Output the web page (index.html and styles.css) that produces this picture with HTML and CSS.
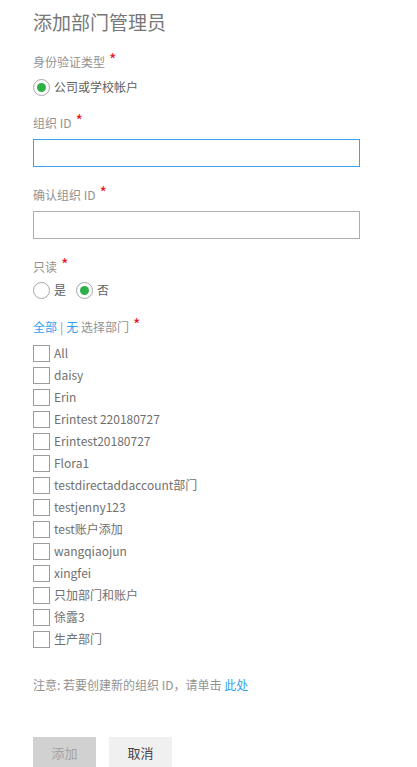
FILE: index.html
```html
<!DOCTYPE html>
<html lang="zh-CN">
<head>
<meta charset="utf-8">
<title>添加部门管理员</title>
<link rel="stylesheet" href="styles.css">
</head>
<body>
<div class="page">
  <h1 class="title">添加部门管理员</h1>

  <div class="label first">身份验证类型<span class="req">*</span></div>
  <div class="radio-row">
    <label class="radio"><span class="dot on"></span><span class="opt">公司或学校帐户</span></label>
  </div>

  <div class="label sec">组织 ID<span class="req">*</span></div>
  <input class="field focus" type="text">

  <div class="label sec2">确认组织 ID<span class="req">*</span></div>
  <input class="field" type="text">

  <div class="label sec2">只读<span class="req">*</span></div>
  <div class="radio-row tight">
    <label class="radio"><span class="dot"></span><span class="opt">是</span></label>
    <label class="radio"><span class="dot on"></span><span class="opt">否</span></label>
  </div>

  <div class="label dept"><a class="link">全部</a><span class="sep">|</span><a class="link">无</a> 选择部门<span class="req">*</span></div>
  <ul class="checks">
    <li><span class="box"></span>All</li>
    <li><span class="box"></span>daisy</li>
    <li><span class="box"></span>Erin</li>
    <li><span class="box"></span>Erintest 220180727</li>
    <li><span class="box"></span>Erintest20180727</li>
    <li><span class="box"></span>Flora1</li>
    <li><span class="box"></span>testdirectaddaccount部门</li>
    <li><span class="box"></span>testjenny123</li>
    <li><span class="box"></span>test账户添加</li>
    <li><span class="box"></span>wangqiaojun</li>
    <li><span class="box"></span>xingfei</li>
    <li><span class="box"></span>只加部门和账户</li>
    <li><span class="box"></span>徐露3</li>
    <li><span class="box"></span>生产部门</li>
  </ul>

  <p class="note">注意: 若要创建新的组织 ID，请单击 <a class="link">此处</a></p>

  <div class="buttons">
    <button class="btn disabled" type="button">添加</button>
    <button class="btn" type="button">取消</button>
  </div>
</div>
</body>
</html>
```
FILE: styles.css
```css
* { box-sizing: border-box; }
html, body { margin: 0; padding: 0; background: #fff; }
body {
  font-family: "Segoe UI", "Noto Sans CJK SC", "Noto Sans", sans-serif;
  font-size: 12px;
  color: #707070;
}
.page { padding: 9px 0 0 33px; }
.title {
  margin: 0;
  font-size: 19px;
  font-weight: normal;
  line-height: 26px;
  color: #777;
}
.label {
  font-size: 12px;
  line-height: 16px;
  color: #929292;
}
.label.first { margin-top: 19px; }
.label.sec { margin-top: 18px; }
.label.sec2 { margin-top: 20px; }
.label.dept { margin-top: 19px; }
.req {
  color: #e81123;
  font-size: 16px;
  line-height: 10px;
  margin-left: 4px;
  position: relative;
  top: -1px;
}
.radio-row {
  display: flex;
  gap: 10px;
  height: 20px;
  align-items: center;
  margin-top: 7px;
}
.radio-row.tight { margin-top: 5px; }
.radio {
  display: flex;
  align-items: center;
  gap: 4px;
}
.dot {
  width: 17px;
  height: 17px;
  border: 1px solid #a6a6a6;
  border-radius: 50%;
  display: flex;
  align-items: center;
  justify-content: center;
}
.dot.on::after {
  content: "";
  width: 9px;
  height: 9px;
  border-radius: 50%;
  background: #2eb049;
}
.opt { color: #606060; line-height: 16px; }
.field {
  display: block;
  width: 327px;
  height: 28px;
  margin-top: 8px;
  border: 1px solid #adadad;
  background: #fff;
  padding: 0 6px;
  font: inherit;
  outline: none;
}
.field.focus { border-color: #3ca0f0; }
.link { color: #2d9ff0; text-decoration: none; cursor: pointer; }
.sep { color: #929292; margin: 0 3px; }
.checks {
  list-style: none;
  margin: 7px 0 0;
  padding: 0;
}
.checks li {
  display: flex;
  align-items: center;
  gap: 4px;
  height: 22px;
  color: #707070;
  line-height: 16px;
}
.box {
  width: 17px;
  height: 17px;
  border: 1px solid #9c9c9c;
  background: #fff;
  flex: none;
}
.note {
  margin: 27px 0 0;
  line-height: 16px;
  color: #929292;
}
.buttons {
  display: flex;
  gap: 13px;
  margin-top: 44px;
}
.btn {
  width: 63px;
  height: 30px;
  border: none;
  font: inherit;
  font-size: 13px;
  background: #f0f0f0;
  color: #444;
  padding: 0;
}
.btn.disabled { background: #d1d1d1; color: #a3a3a3; }
```
